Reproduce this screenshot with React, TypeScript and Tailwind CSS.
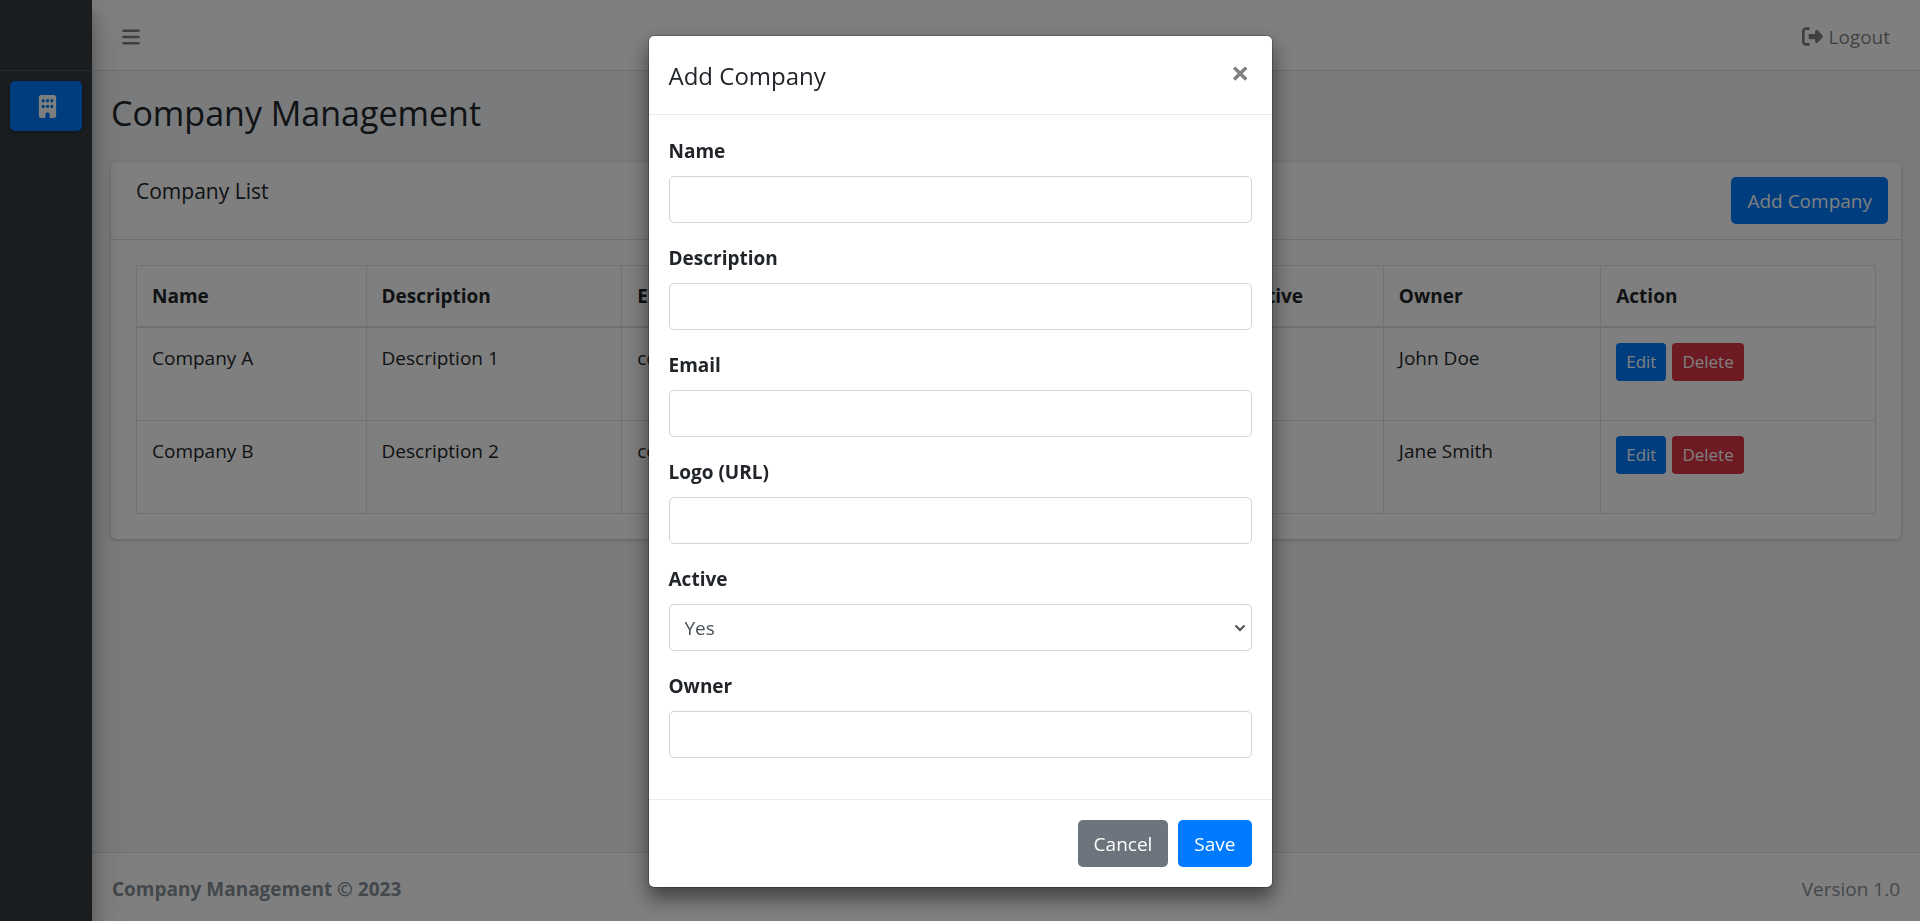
import { useState } from "react";
import { FaBars, FaBuilding, FaRightFromBracket } from "react-icons/fa6";

type Company = {
  name: string;
  description: string;
  email: string;
  active: string;
  owner: string;
};

const companies: Company[] = [
  { name: "Company A", description: "Description 1", email: "companya@example.com", active: "No", owner: "John Doe" },
  { name: "Company B", description: "Description 2", email: "companyb@example.com", active: "No", owner: "Jane Smith" },
];

const columns = [
  { label: "Name", width: "w-[13.2%]" },
  { label: "Description", width: "w-[14.7%]" },
  { label: "Email", width: "w-[22.9%]" },
  { label: "Logo", width: "w-[12%]" },
  { label: "Active", width: "w-[8.9%]" },
  { label: "Owner", width: "w-[12.5%]" },
  { label: "Action", width: "w-[15.8%]" },
];

function Sidebar() {
  return (
    <aside className="z-10 w-[92px] shrink-0 bg-[#343a40] shadow-[0_18px_35px_rgba(0,0,0,0.25),0_12px_12px_rgba(0,0,0,0.22)]">
      <div className="h-[71px] border-b border-[#4b545c]" />
      <nav className="p-2.5">
        <a
          href="#companies"
          aria-label="Companies"
          className="flex h-[50px] items-center justify-center rounded-[5px] bg-[#007bff] pl-[3px] text-white shadow-[0_1px_4px_rgba(0,0,0,0.12),0_1px_2px_rgba(0,0,0,0.24)]"
        >
          <FaBuilding className="size-[23px]" />
        </a>
      </nav>
    </aside>
  );
}

function Navbar() {
  return (
    <header className="flex h-[71px] items-center justify-between border-b border-[#dee2e6] bg-white pt-[3px] pr-[30px] pl-[29px] text-black/50">
      <button type="button" aria-label="Toggle menu" className="flex">
        <FaBars className="size-5" />
      </button>
      <a href="#logout" className="flex items-center gap-[5px] leading-[30px]">
        <FaRightFromBracket className="size-[21px]" />
        Logout
      </a>
    </header>
  );
}

function LogoMark() {
  return (
    <svg viewBox="0 0 62 62" className="size-[62px]" aria-hidden="true">
      <rect width="62" height="62" rx="6" fill="#dee2e6" />
      <path d="M18 46V18h16v28M34 28h10v18M14 46h34" fill="none" stroke="#6c757d" strokeWidth="3" />
    </svg>
  );
}

function CompanyTable() {
  return (
    <table className="w-full table-fixed border-collapse border border-[#dee2e6] text-left">
      <thead>
        <tr>
          {columns.map((c) => (
            <th key={c.label} className={`${c.width} border border-b-2 border-[#dee2e6] px-[15px] py-[15px] font-bold`}>
              {c.label}
            </th>
          ))}
        </tr>
      </thead>
      <tbody>
        {companies.map((c) => (
          <tr key={c.name} className="align-top">
            <td className="border border-[#dee2e6] p-[15px]">{c.name}</td>
            <td className="border border-[#dee2e6] p-[15px]">{c.description}</td>
            <td className="border border-[#dee2e6] p-[15px]">{c.email}</td>
            <td className="border border-[#dee2e6] p-[15px]">
              <LogoMark />
            </td>
            <td className="border border-[#dee2e6] p-[15px]">{c.active}</td>
            <td className="border border-[#dee2e6] p-[15px]">{c.owner}</td>
            <td className="border border-[#dee2e6] p-[15px]">
              <div className="flex gap-1.5 text-[17px] text-white">
                <button type="button" className="h-[38px] rounded bg-[#007bff] px-2.5">
                  Edit
                </button>
                <button type="button" className="h-[38px] rounded bg-[#dc3545] px-2.5">
                  Delete
                </button>
              </div>
            </td>
          </tr>
        ))}
      </tbody>
    </table>
  );
}

function TextField({ id, label }: { id: string; label: string }) {
  return (
    <div className="mb-5">
      <label htmlFor={id} className="mb-2.5 block font-bold">
        {label}
      </label>
      <input id={id} type="text" className="block h-[47px] w-full rounded-[5px] border border-[#ced4da] px-[15px] text-[#495057]" />
    </div>
  );
}

function CompanyDialog({ onClose }: { onClose: () => void }) {
  return (
    <div className="fixed inset-0 z-20 overflow-hidden bg-black/50 pt-[35px]">
      <div
        role="dialog"
        aria-modal="true"
        aria-labelledby="dialog-title"
        className="mx-auto w-full max-w-[625px] rounded-md border border-black/20 bg-white bg-clip-padding shadow-[0_10px_20px_rgba(0,0,0,0.5)]"
      >
        <div className="flex items-start justify-between border-b border-[#e9ecef] px-5 pt-[21px] pb-[19px]">
          <h2 id="dialog-title" className="text-2xl leading-[38px]">
            Add Company
          </h2>
          <button type="button" aria-label="Close" onClick={onClose} className="px-0.5 text-[33px] leading-[32px] font-bold text-black/50">
            ×
          </button>
        </div>
        <form onSubmit={(e) => e.preventDefault()}>
          <div className="px-5 pt-[21px] pb-[21px]">
            <TextField id="name" label="Name" />
            <TextField id="description" label="Description" />
            <TextField id="email" label="Email" />
            <TextField id="logo" label="Logo (URL)" />
            <div className="mb-5">
              <label htmlFor="active" className="mb-2.5 block font-bold">
                Active
              </label>
              <div className="grid items-center">
                <select
                  id="active"
                  className="col-start-1 row-start-1 block h-[47px] w-full appearance-none rounded-[5px] border border-[#ced4da] bg-white px-[15px] text-[#495057]"
                >
                  <option>Yes</option>
                  <option>No</option>
                </select>
                <svg
                  viewBox="0 0 12 8"
                  aria-hidden="true"
                  className="pointer-events-none col-start-1 row-start-1 mr-1.5 h-2 w-3 justify-self-end"
                >
                  <path d="M1.5 1.5 6 6l4.500-4.500" fill="none" stroke="#495057" strokeWidth="2" />
                </svg>
              </div>
            </div>
            <TextField id="owner" label="Owner" />
          </div>
          <div className="flex justify-end gap-2.5 border-t border-[#e9ecef] p-5 text-white">
            <button type="button" onClick={onClose} className="h-[47px] rounded-[5px] bg-[#6c757d] px-4">
              Cancel
            </button>
            <button type="submit" className="h-[47px] rounded-[5px] bg-[#007bff] px-4">
              Save
            </button>
          </div>
        </form>
      </div>
    </div>
  );
}

export default function App() {
  const [open, setOpen] = useState(true);

  return (
    <div className="flex min-h-screen bg-[#f4f6f9] font-['Open_Sans',sans-serif] text-[19px] leading-[30px] text-[#212529]">
      <Sidebar />
      <div className="flex min-w-0 flex-1 flex-col">
        <Navbar />
        <main className="flex-1 px-[19px] pt-[21px]">
          <h1 className="mb-[27px] text-[34px] leading-[43px]">Company Management</h1>
          <section className="rounded-[5px] bg-white shadow-[0_0_1px_rgba(0,0,0,0.125),0_1px_4px_rgba(0,0,0,0.2)]">
            <div className="flex items-start justify-between border-b border-black/[.125] pt-[15px] pr-[13px] pb-[15px] pl-[25px]">
              <h2 className="text-[21px] leading-[28px]">Company List</h2>
              <button type="button" onClick={() => setOpen(true)} className="h-[47px] rounded-[5px] bg-[#007bff] px-4 text-white">
                Add Company
              </button>
            </div>
            <div className="p-[25px]">
              <CompanyTable />
            </div>
          </section>
        </main>
        <footer className="flex justify-between border-t border-[#dee2e6] bg-white px-5 pt-[21px] pb-[17px] text-[#869099]">
          <strong>Company Management © 2023</strong>
          <span>Version 1.0</span>
        </footer>
      </div>
      {open && <CompanyDialog onClose={() => setOpen(false)} />}
    </div>
  );
}
